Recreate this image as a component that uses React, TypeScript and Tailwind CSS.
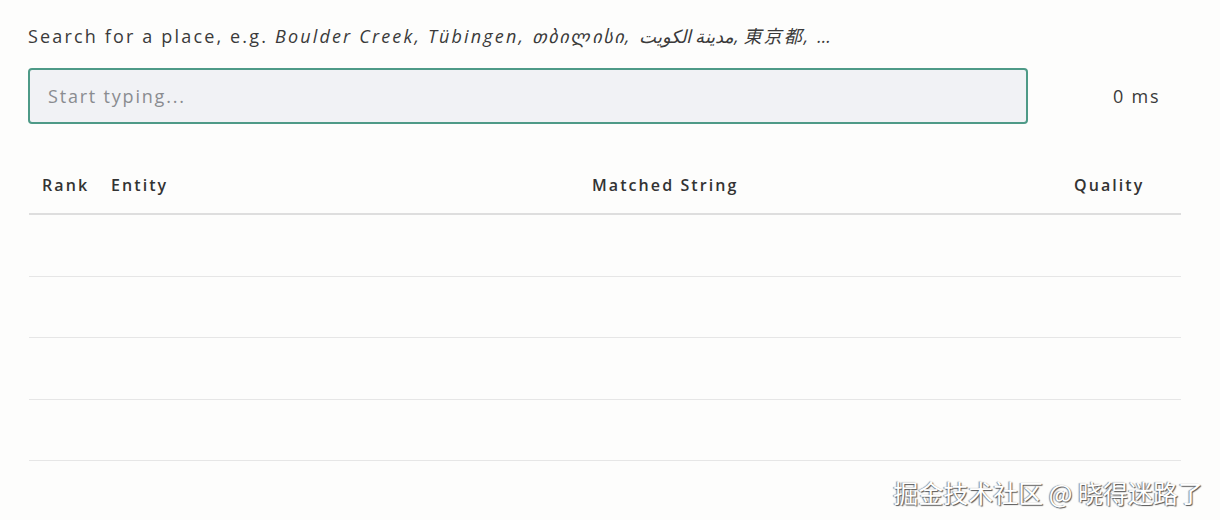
import { useState } from "react";

// column header labels
const columns = ["Rank", "Entity", "Matched String", "Quality"];

export default function App() {
  const [query, setQuery] = useState("");
  const rows = [0, 1, 2, 3];

  return (
    <div className="relative w-[1220px] h-[520px] bg-[#fdfdfc] font-['Open_Sans','Noto_Sans_CJK_JP',sans-serif] text-[#333]">
      <div className="pl-[28px] pr-[39px] pt-[22px]">
        <p className="text-[18px] leading-[28px] tracking-[0.12em] text-[#3a3a3a]">
          Search for a place, e.g.{" "}
          <i>Boulder Creek, Tübingen, თბილისი, مدينة الكويت, 東京都, …</i>
        </p>

        <div className="mt-[18px] flex items-center">
          <input
            type="text"
            value={query}
            onChange={(e) => setQuery(e.target.value)}
            placeholder="Start typing..."
            className="w-[1000px] h-[56px] px-[18px] rounded-[4px] border-2 border-[#4e9a87] bg-[#f1f2f5] text-[18px] tracking-[0.1em] text-[#333] placeholder:text-[#8a8c90] outline-none"
          />
          <span className="ml-[85px] text-[18px] tracking-[0.1em] text-[#3a3a3a]">0 ms</span>
        </div>

        <div className="mt-[32px] w-[1152px] ml-px">
          <div className="grid grid-cols-[69px_481px_482px_120px] h-[59px] items-center border-b-2 border-[#dedede]">
            {columns.map((c) => (
              <div key={c} className="pl-[13px] pt-[1px] text-[16px] font-semibold tracking-[0.13em] text-[#333]">
                {c}
              </div>
            ))}
          </div>
          {rows.map((r) => (
            <div key={r} className="h-[61.5px] border-b border-[#e6e6e6]" />
          ))}
        </div>
      </div>

      <div className="absolute right-[17px] bottom-[12px] text-[25px] leading-[32px] text-white font-['Noto_Sans_CJK_SC',sans-serif] [text-shadow:1px_1px_1px_#555,-1px_0_1px_#888]">
        掘金技术社区 @ 晓得迷路了
      </div>
    </div>
  );
}
